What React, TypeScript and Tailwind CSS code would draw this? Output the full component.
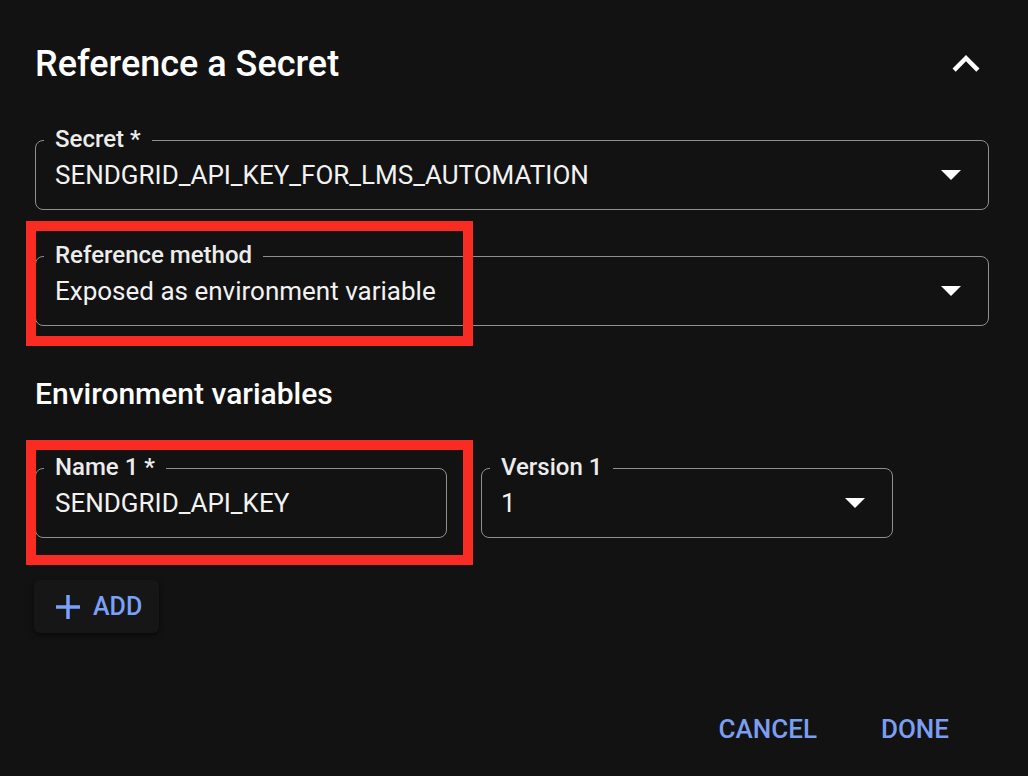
import React from "react";

// Outlined select/text field with a notched label
const OutlinedField: React.FC<{
  label: string;
  value: string;
  select?: boolean;
  className?: string;
}> = ({ label, value, select = false, className = "" }) => (
  <div
    className={`relative flex h-[70px] items-center rounded-[8px] border border-[#8f8f8f] pl-[19px] pr-[27px] ${className}`}
  >
    <span className="absolute left-[8px] top-[-2px] -translate-y-1/2 bg-[#121212] px-[11px] text-[24px] font-medium leading-none text-[#ececec]">
      {label}
    </span>
    <span className="flex-1 whitespace-nowrap text-[26px] leading-[30px] text-[#f2f2f2]">
      {value}
    </span>
    {select && (
      <svg width="20" height="10" viewBox="0 0 20 10" className="shrink-0">
        <polygon points="0,0 20,0 10,10" fill="#ffffff" />
      </svg>
    )}
  </div>
);

// Red annotation frame drawn over a field
const Highlight: React.FC<{ top: string }> = ({ top }) => (
  <div
    className={`pointer-events-none absolute left-[-9px] ${top} h-[125px] w-[447px] border-[10px] border-[#fa2b22]`}
  />
);

const App: React.FC = () => {
  return (
    <div className="min-h-screen w-full bg-[#121212] font-['Roboto',sans-serif] text-white">
      <div className="pl-[35px] pr-[39px] pt-[37px]">
        {/* Header */}
        <div className="-mr-[4px] flex h-[54px] items-center justify-between">
          <h2 className="text-[36px] font-medium leading-none text-white">
            Reference a Secret
          </h2>
          <svg width="54" height="54" viewBox="0 0 24 24">
            <path
              d="M12 8l-6 6 1.41 1.41L12 10.83l4.59 4.58L18 14z"
              fill="#ffffff"
            />
          </svg>
        </div>

        {/* Secret */}
        <OutlinedField
          className="mt-[49px]"
          label="Secret *"
          value="SENDGRID_API_KEY_FOR_LMS_AUTOMATION"
          select
        />

        {/* Reference method */}
        <div className="relative mt-[46px]">
          <OutlinedField
            label="Reference method"
            value="Exposed as environment variable"
            select
          />
          <Highlight top="top-[-35px]" />
        </div>

        <h3 className="mt-[53px] text-[30px] font-medium leading-none text-white">
          Environment variables
        </h3>

        {/* Name / Version row */}
        <div className="mt-[59px] flex gap-[34px]">
          <div className="relative w-[412px]">
            <OutlinedField label="Name 1 *" value="SENDGRID_API_KEY" />
            <Highlight top="top-[-28px]" />
          </div>
          <OutlinedField
            className="w-[412px]"
            label="Version 1"
            value="1"
            select
          />
        </div>

        {/* Add button */}
        <button className="mt-[42px] -ml-[1px] flex h-[53px] items-center gap-[13px] rounded-[6px] bg-[#161616] pl-[22px] pr-[17px] shadow-[0_2px_5px_rgba(0,0,0,0.6)]">
          <svg width="24" height="24" viewBox="0 0 24 24">
            <path d="M12 0v24M0 12h24" stroke="#7aa0f7" strokeWidth="3.5" />
          </svg>
          <span className="text-[25px] font-medium leading-none text-[#7aa0f7]">
            ADD
          </span>
        </button>

        {/* Footer actions */}
        <div className="mt-[83px] flex justify-end gap-[64px] pr-[40px]">
          <button className="text-[26px] font-medium leading-none text-[#7b9ef1]">
            CANCEL
          </button>
          <button className="text-[26px] font-medium leading-none text-[#7b9ef1]">
            DONE
          </button>
        </div>
      </div>
    </div>
  );
};

export default App;
